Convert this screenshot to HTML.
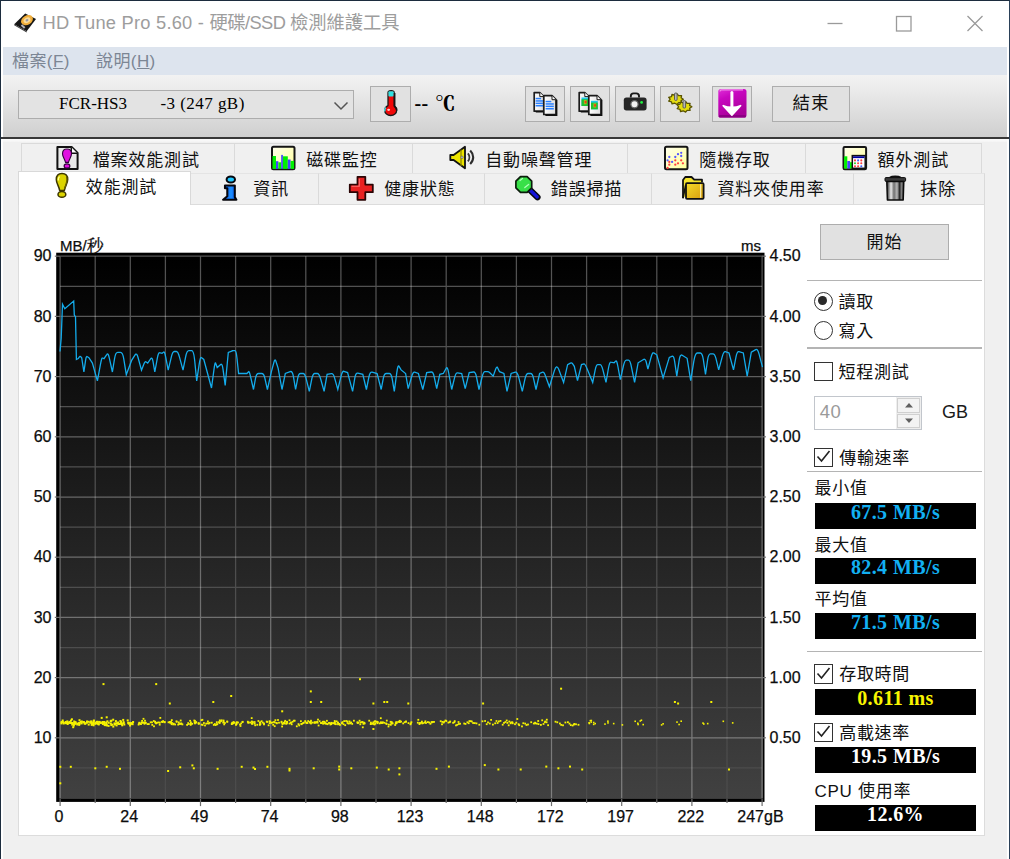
<!DOCTYPE html>
<html><head><meta charset="utf-8"><title>HD Tune Pro 5.60</title>
<style>
html,body{margin:0;padding:0}
body{width:1010px;height:859px;overflow:hidden;position:relative;background:#f0f0f0;font-family:"Liberation Sans","Noto Sans CJK TC",sans-serif;color:#111}
.abs,.tab,.ic,.tl,.btn,.blk,.sep,.lbl,.cb,.rd{position:absolute;box-sizing:border-box}
#frame{position:absolute;left:0;top:0;width:1010px;height:859px;box-sizing:border-box;border-top:1px solid #1c2c3e;border-left:1px solid #1c2c3e;border-right:1px solid #2a4058;pointer-events:none;z-index:50}
#inner{position:absolute;left:1px;top:1px;width:1008px;height:858px;box-sizing:border-box;border-left:2px solid #fff;border-right:2px solid #fff;pointer-events:none;z-index:49}
#title{position:absolute;left:1px;top:1px;width:1008px;height:46px;background:#fff}
#title .t{position:absolute;left:41.500px;top:7.400px;font-size:18.300px;color:#9d9d9d;white-space:nowrap;letter-spacing:0}
#menu{position:absolute;left:3px;top:47px;width:1004px;height:28px;background:#dde4ee}
#menu span{position:absolute;top:0.300px;font-size:17px;color:#7c8694;white-space:nowrap;letter-spacing:0.400px}
#tool{position:absolute;left:3px;top:75px;width:1004px;height:62px;background:linear-gradient(#f2f2f2 0,#ececec 20%,#dedede 60%,#cfcfcf 100%)}
#tline{position:absolute;left:1px;top:136.800px;width:1008px;height:1.800px;background:#383838;z-index:51}
#tline2{position:absolute;left:3px;top:138.600px;width:1004px;height:3px;background:linear-gradient(#fcfcfc,#f4f4f4)}
.btn{border:1px solid #adadad;background:#e1e1e1}
.btn svg{position:absolute}
#combo{position:absolute;left:18px;top:89.500px;width:336px;height:29.500px;box-sizing:border-box;border:1px solid #adadad;background:#e3e3e3}
#combo .v{position:absolute;left:40px;top:3px;font-family:"Liberation Serif","Noto Serif CJK SC",serif;font-size:17px;color:#000;white-space:pre}
.tab{border:1px solid #dadada;border-bottom:none;background:#f0f0f0;overflow:hidden}
.tab.bot{border-top-color:#e4e4e4}
.tab.sel{background:#fff;z-index:5;border-color:#d9d9d9}
.ic{display:block;line-height:0}
.tl{font-size:17px;white-space:nowrap;color:#111;letter-spacing:0.850px}
#panel{position:absolute;left:18px;top:204px;width:967px;height:632px;box-sizing:border-box;background:#fff;border:1px solid #dcdcdc}
.chart{position:absolute;left:0;top:0}
.sep{height:1.200px;background:#b4b4b4;left:806.500px;width:175.500px}
.lbl{font-size:17px;white-space:nowrap;color:#111;letter-spacing:0.700px}
.blk{background:#000;left:815px;width:161px;height:26px;text-align:center;font-family:"Liberation Serif","Noto Serif CJK SC",serif;font-weight:bold;font-size:20px;line-height:18.400px;letter-spacing:0.400px;white-space:nowrap;overflow:hidden}
.cb{width:19.200px;height:19.200px;border:1.500px solid #333;background:#fff;left:814px}
.cb svg{position:absolute;left:-1.500px;top:-1.500px}
.rd{width:19px;height:19px;border:1.500px solid #333;border-radius:50%;background:#fff;left:813.600px}
.rd i{position:absolute;left:3.600px;top:3.600px;width:8.800px;height:8.800px;border-radius:50%;background:#2a2a2a}
</style></head><body>
<div id="title">
<div class="t"><span style="letter-spacing:0.230px">HD Tune Pro 5.60 - </span><span style="letter-spacing:-0.550px">硬碟/SSD </span>檢測維護工具</div>
<svg class="abs" style="left:815px;top:6.800px" width="180" height="32" viewBox="0 0 180 32"><g stroke="#9a9a9a" stroke-width="1.300" fill="none"><path d="M11.500 15.500h15"/><rect x="80.500" y="8.500" width="14.500" height="14.500"/><path d="M151.500 8l15 15M166.500 8l-15 15"/></g></svg>
</div>
<div id="menu"><span style="left:9px">檔案(<u>F</u>)</span><span style="left:93px">說明(<u>H</u>)</span></div>
<div id="tool"></div><div id="tline"></div><div id="tline2"></div>
<div id="combo"><span class="v">FCR-HS3</span><span class="v" style="left:141.500px;letter-spacing:0.450px">-3 (247 gB)</span><svg class="abs" style="left:313px;top:9px" width="18" height="12" viewBox="0 0 18 12"><path d="M2.500 2.500l6.500 6.500 6.500-6.500" fill="none" stroke="#555" stroke-width="1.500"/></svg></div>
<div class="btn" style="left:370px;top:86px;width:40.500px;height:36px"></div>
<div class="abs" style="left:414.500px;top:91.500px;font-family:'Liberation Serif',serif;font-size:20px;font-weight:bold;white-space:pre;color:#000;letter-spacing:0.300px">--</div><div class="abs" style="left:435.300px;top:88px;font-family:'Noto Serif CJK SC','Noto Serif CJK JP',serif;font-size:20px;font-weight:900;color:#000">℃</div>
<div class="btn" style="left:525px;top:86px;width:40px;height:36px"></div>
<div class="btn" style="left:570px;top:86px;width:40px;height:36px"></div>
<div class="btn" style="left:615px;top:86px;width:40px;height:36px"></div>
<div class="btn" style="left:660px;top:86px;width:40px;height:36px"></div>
<div class="btn" style="left:712px;top:86px;width:40px;height:36px"></div>
<div class="btn" style="left:772px;top:86px;width:78px;height:36px;text-align:center;font-size:17.5px;line-height:32px;letter-spacing:1px">結束</div>

<div id="panel"></div>
<div class="tab" style="left:20.5px;top:143.300px;width:214.5px;height:31px"><span class="tl" style="left:71.2px;top:1.700px">檔案效能測試</span></div>
<div class="tab" style="left:234px;top:143.300px;width:179.0px;height:31px"><span class="tl" style="left:71.2px;top:1.700px">磁碟監控</span></div>
<div class="tab" style="left:412px;top:143.300px;width:215.5px;height:31px"><span class="tl" style="left:72.2px;top:1.700px">自動噪聲管理</span></div>
<div class="tab" style="left:626.5px;top:143.300px;width:179.5px;height:31px"><span class="tl" style="left:71.8px;top:1.700px">隨機存取</span></div>
<div class="tab" style="left:805px;top:143.300px;width:177.0px;height:31px"><span class="tl" style="left:71.6px;top:1.700px">額外測試</span></div>
<div class="tab sel" style="left:18px;top:170.600px;width:173.3px;height:34.400px"><span class="tl" style="left:66.8px;top:1px">效能測試</span></div>
<div class="tab bot" style="left:190.3px;top:173px;width:128.4px;height:31px"><span class="tl" style="left:62.0px;top:1px">資訊</span></div>
<div class="tab bot" style="left:317.7px;top:173px;width:167.6px;height:31px"><span class="tl" style="left:65.5px;top:1px">健康狀態</span></div>
<div class="tab bot" style="left:484.3px;top:173px;width:167.6px;height:31px"><span class="tl" style="left:65.5px;top:1px">錯誤掃描</span></div>
<div class="tab bot" style="left:650.9px;top:173px;width:203.1px;height:31px"><span class="tl" style="left:65.5px;top:1px">資料夾使用率</span></div>
<div class="tab bot" style="left:853px;top:173px;width:132.0px;height:31px"><span class="tl" style="left:66.3px;top:1px">抹除</span></div>
<svg class="chart" width="1010" height="859" viewBox="0 0 1010 859">
<defs><linearGradient id="cg" x1="0" y1="0" x2="0" y2="1"><stop offset="0" stop-color="#000"/><stop offset="1" stop-color="#414141"/></linearGradient><linearGradient id="mn" gradientUnits="userSpaceOnUse" x1="0" y1="256" x2="0" y2="800"><stop offset="0" stop-color="#525252"/><stop offset="1" stop-color="#4b4b4b"/></linearGradient></defs>
<rect x="56.200" y="252.700" width="708.300" height="549.200" fill="#000"/>
<rect x="59.300" y="255.500" width="703.500" height="543.400" fill="url(#cg)"/>
<path d="M95.20 256.20V798.00M165.40 256.20V798.00M235.60 256.20V798.00M305.80 256.20V798.00M376.00 256.20V798.00M446.20 256.20V798.00M516.40 256.20V798.00M586.60 256.20V798.00M656.80 256.20V798.00M727.00 256.20V798.00M60.10 286.30H762.10M60.10 346.50H762.10M60.10 406.70H762.10M60.10 466.90H762.10M60.10 527.10H762.10M60.10 587.30H762.10M60.10 647.50H762.10M60.10 707.70H762.10M60.10 767.90H762.10" fill="none" stroke="url(#mn)" stroke-width="1.250"/>
<path d="M60.10 256.20V798.00M130.30 256.20V798.00M200.50 256.20V798.00M270.70 256.20V798.00M340.90 256.20V798.00M411.10 256.20V798.00M481.30 256.20V798.00M551.50 256.20V798.00M621.70 256.20V798.00M691.90 256.20V798.00M762.10 256.20V798.00M60.10 256.20H762.10M60.10 316.40H762.10M60.10 376.60H762.10M60.10 436.80H762.10M60.10 497.00H762.10M60.10 557.20H762.10M60.10 617.40H762.10M60.10 677.60H762.10M60.10 737.80H762.10" fill="none" stroke="#fff" stroke-opacity="0.330" stroke-width="1.250"/>
<g fill="#f6f200">
<rect x="60.4" y="722.4" width="2.0" height="2.0"/>
<rect x="61.0" y="721.1" width="2.0" height="2.0"/>
<rect x="60.5" y="721.1" width="2.0" height="2.0"/>
<rect x="62.0" y="721.2" width="2.0" height="2.0"/>
<rect x="61.7" y="719.5" width="2.0" height="2.0"/>
<rect x="62.7" y="722.5" width="2.0" height="2.0"/>
<rect x="62.9" y="721.8" width="2.0" height="2.0"/>
<rect x="65.0" y="722.2" width="2.0" height="2.0"/>
<rect x="64.8" y="721.0" width="2.0" height="2.0"/>
<rect x="66.3" y="720.4" width="2.0" height="2.0"/>
<rect x="65.6" y="722.0" width="2.0" height="2.0"/>
<rect x="66.7" y="723.0" width="2.0" height="2.0"/>
<rect x="67.6" y="721.8" width="2.0" height="2.0"/>
<rect x="66.4" y="721.8" width="2.0" height="2.0"/>
<rect x="68.6" y="720.9" width="2.0" height="2.0"/>
<rect x="69.0" y="721.4" width="2.0" height="2.0"/>
<rect x="68.5" y="721.7" width="2.0" height="2.0"/>
<rect x="69.2" y="722.0" width="2.0" height="2.0"/>
<rect x="70.0" y="719.6" width="2.0" height="2.0"/>
<rect x="71.0" y="722.0" width="2.0" height="2.0"/>
<rect x="70.9" y="718.3" width="2.0" height="2.0"/>
<rect x="72.8" y="724.5" width="2.0" height="2.0"/>
<rect x="71.2" y="723.6" width="2.0" height="2.0"/>
<rect x="72.2" y="726.2" width="2.0" height="2.0"/>
<rect x="73.1" y="722.0" width="2.0" height="2.0"/>
<rect x="73.2" y="720.5" width="2.0" height="2.0"/>
<rect x="72.8" y="723.4" width="2.0" height="2.0"/>
<rect x="74.0" y="722.8" width="2.0" height="2.0"/>
<rect x="74.8" y="722.2" width="2.0" height="2.0"/>
<rect x="74.5" y="721.1" width="2.0" height="2.0"/>
<rect x="76.5" y="722.9" width="2.0" height="2.0"/>
<rect x="76.3" y="723.5" width="2.0" height="2.0"/>
<rect x="77.6" y="722.1" width="2.0" height="2.0"/>
<rect x="78.5" y="722.0" width="2.0" height="2.0"/>
<rect x="78.6" y="722.8" width="2.0" height="2.0"/>
<rect x="78.2" y="723.9" width="2.0" height="2.0"/>
<rect x="78.5" y="719.2" width="2.0" height="2.0"/>
<rect x="80.8" y="720.8" width="2.0" height="2.0"/>
<rect x="79.7" y="720.9" width="2.0" height="2.0"/>
<rect x="80.7" y="722.4" width="2.0" height="2.0"/>
<rect x="80.8" y="720.6" width="2.0" height="2.0"/>
<rect x="83.7" y="722.2" width="2.0" height="2.0"/>
<rect x="82.9" y="721.0" width="2.0" height="2.0"/>
<rect x="84.3" y="722.8" width="2.0" height="2.0"/>
<rect x="83.6" y="722.4" width="2.0" height="2.0"/>
<rect x="85.8" y="721.8" width="2.0" height="2.0"/>
<rect x="86.0" y="720.5" width="2.0" height="2.0"/>
<rect x="87.7" y="723.6" width="2.0" height="2.0"/>
<rect x="87.3" y="720.8" width="2.0" height="2.0"/>
<rect x="89.4" y="720.8" width="2.0" height="2.0"/>
<rect x="89.3" y="721.6" width="2.0" height="2.0"/>
<rect x="90.3" y="720.4" width="2.0" height="2.0"/>
<rect x="90.3" y="721.6" width="2.0" height="2.0"/>
<rect x="90.8" y="722.4" width="2.0" height="2.0"/>
<rect x="90.4" y="721.1" width="2.0" height="2.0"/>
<rect x="90.7" y="723.9" width="2.0" height="2.0"/>
<rect x="92.3" y="721.9" width="2.0" height="2.0"/>
<rect x="91.9" y="723.3" width="2.0" height="2.0"/>
<rect x="92.5" y="722.6" width="2.0" height="2.0"/>
<rect x="92.9" y="719.5" width="2.0" height="2.0"/>
<rect x="92.8" y="720.0" width="2.0" height="2.0"/>
<rect x="92.6" y="724.3" width="2.0" height="2.0"/>
<rect x="94.3" y="721.6" width="2.0" height="2.0"/>
<rect x="94.2" y="722.8" width="2.0" height="2.0"/>
<rect x="95.6" y="722.4" width="2.0" height="2.0"/>
<rect x="96.0" y="720.8" width="2.0" height="2.0"/>
<rect x="96.2" y="721.5" width="2.0" height="2.0"/>
<rect x="97.3" y="723.1" width="2.0" height="2.0"/>
<rect x="96.7" y="722.3" width="2.0" height="2.0"/>
<rect x="96.8" y="720.9" width="2.0" height="2.0"/>
<rect x="99.1" y="721.4" width="2.0" height="2.0"/>
<rect x="98.3" y="720.9" width="2.0" height="2.0"/>
<rect x="97.8" y="723.4" width="2.0" height="2.0"/>
<rect x="100.0" y="721.9" width="2.0" height="2.0"/>
<rect x="100.7" y="716.9" width="2.0" height="2.0"/>
<rect x="99.4" y="721.8" width="2.0" height="2.0"/>
<rect x="102.4" y="721.7" width="2.0" height="2.0"/>
<rect x="101.6" y="721.0" width="2.0" height="2.0"/>
<rect x="101.9" y="723.0" width="2.0" height="2.0"/>
<rect x="103.1" y="721.0" width="2.0" height="2.0"/>
<rect x="103.4" y="722.4" width="2.0" height="2.0"/>
<rect x="103.7" y="724.0" width="2.0" height="2.0"/>
<rect x="105.5" y="723.6" width="2.0" height="2.0"/>
<rect x="105.2" y="721.5" width="2.0" height="2.0"/>
<rect x="104.4" y="724.2" width="2.0" height="2.0"/>
<rect x="106.4" y="720.3" width="2.0" height="2.0"/>
<rect x="106.0" y="724.4" width="2.0" height="2.0"/>
<rect x="105.3" y="722.3" width="2.0" height="2.0"/>
<rect x="107.6" y="724.9" width="2.0" height="2.0"/>
<rect x="107.7" y="721.8" width="2.0" height="2.0"/>
<rect x="109.7" y="720.1" width="2.0" height="2.0"/>
<rect x="109.8" y="722.5" width="2.0" height="2.0"/>
<rect x="110.4" y="719.7" width="2.0" height="2.0"/>
<rect x="111.4" y="723.7" width="2.0" height="2.0"/>
<rect x="110.3" y="724.1" width="2.0" height="2.0"/>
<rect x="112.2" y="718.7" width="2.0" height="2.0"/>
<rect x="112.3" y="725.6" width="2.0" height="2.0"/>
<rect x="113.5" y="722.5" width="2.0" height="2.0"/>
<rect x="113.9" y="723.5" width="2.0" height="2.0"/>
<rect x="114.5" y="722.5" width="2.0" height="2.0"/>
<rect x="114.9" y="720.1" width="2.0" height="2.0"/>
<rect x="115.6" y="724.4" width="2.0" height="2.0"/>
<rect x="116.9" y="722.5" width="2.0" height="2.0"/>
<rect x="117.1" y="721.5" width="2.0" height="2.0"/>
<rect x="115.9" y="722.2" width="2.0" height="2.0"/>
<rect x="117.7" y="722.8" width="2.0" height="2.0"/>
<rect x="118.7" y="723.0" width="2.0" height="2.0"/>
<rect x="117.9" y="723.0" width="2.0" height="2.0"/>
<rect x="119.6" y="722.7" width="2.0" height="2.0"/>
<rect x="119.4" y="720.0" width="2.0" height="2.0"/>
<rect x="120.0" y="720.8" width="2.0" height="2.0"/>
<rect x="120.1" y="721.6" width="2.0" height="2.0"/>
<rect x="120.9" y="723.0" width="2.0" height="2.0"/>
<rect x="122.2" y="718.9" width="2.0" height="2.0"/>
<rect x="121.2" y="724.3" width="2.0" height="2.0"/>
<rect x="123.3" y="723.5" width="2.0" height="2.0"/>
<rect x="122.6" y="722.0" width="2.0" height="2.0"/>
<rect x="122.6" y="721.1" width="2.0" height="2.0"/>
<rect x="126.7" y="719.4" width="2.0" height="2.0"/>
<rect x="127.3" y="721.7" width="2.0" height="2.0"/>
<rect x="127.6" y="722.0" width="2.0" height="2.0"/>
<rect x="127.8" y="722.3" width="2.0" height="2.0"/>
<rect x="127.8" y="722.6" width="2.0" height="2.0"/>
<rect x="129.1" y="724.5" width="2.0" height="2.0"/>
<rect x="129.5" y="723.0" width="2.0" height="2.0"/>
<rect x="130.0" y="722.6" width="2.0" height="2.0"/>
<rect x="129.9" y="722.1" width="2.0" height="2.0"/>
<rect x="131.6" y="723.2" width="2.0" height="2.0"/>
<rect x="132.1" y="721.0" width="2.0" height="2.0"/>
<rect x="131.2" y="722.3" width="2.0" height="2.0"/>
<rect x="138.1" y="722.6" width="1.8" height="1.8"/>
<rect x="137.7" y="723.7" width="1.8" height="1.8"/>
<rect x="138.4" y="721.8" width="1.8" height="1.8"/>
<rect x="139.0" y="722.6" width="1.8" height="1.8"/>
<rect x="141.2" y="720.0" width="1.8" height="1.8"/>
<rect x="140.1" y="723.2" width="1.8" height="1.8"/>
<rect x="140.6" y="721.7" width="1.8" height="1.8"/>
<rect x="141.7" y="721.9" width="1.8" height="1.8"/>
<rect x="142.8" y="721.6" width="1.8" height="1.8"/>
<rect x="143.6" y="722.9" width="1.8" height="1.8"/>
<rect x="143.7" y="722.2" width="1.8" height="1.8"/>
<rect x="142.6" y="717.9" width="1.8" height="1.8"/>
<rect x="144.9" y="722.0" width="1.8" height="1.8"/>
<rect x="144.1" y="719.8" width="1.8" height="1.8"/>
<rect x="144.5" y="721.7" width="1.8" height="1.8"/>
<rect x="146.6" y="723.2" width="1.8" height="1.8"/>
<rect x="147.9" y="723.2" width="1.8" height="1.8"/>
<rect x="149.8" y="721.4" width="1.8" height="1.8"/>
<rect x="151.1" y="721.4" width="1.8" height="1.8"/>
<rect x="151.4" y="724.0" width="1.8" height="1.8"/>
<rect x="152.9" y="720.1" width="1.8" height="1.8"/>
<rect x="154.2" y="720.8" width="1.8" height="1.8"/>
<rect x="153.1" y="725.4" width="1.8" height="1.8"/>
<rect x="154.4" y="721.7" width="1.8" height="1.8"/>
<rect x="155.2" y="722.5" width="1.8" height="1.8"/>
<rect x="155.3" y="722.1" width="1.8" height="1.8"/>
<rect x="156.2" y="721.8" width="1.8" height="1.8"/>
<rect x="157.7" y="721.5" width="1.8" height="1.8"/>
<rect x="158.9" y="721.8" width="1.8" height="1.8"/>
<rect x="158.8" y="723.8" width="1.8" height="1.8"/>
<rect x="159.4" y="717.0" width="1.8" height="1.8"/>
<rect x="160.8" y="720.9" width="1.8" height="1.8"/>
<rect x="161.7" y="721.2" width="1.8" height="1.8"/>
<rect x="162.2" y="720.2" width="1.8" height="1.8"/>
<rect x="163.6" y="721.4" width="1.8" height="1.8"/>
<rect x="163.8" y="721.1" width="1.8" height="1.8"/>
<rect x="167.6" y="721.4" width="1.8" height="1.8"/>
<rect x="169.2" y="721.8" width="1.8" height="1.8"/>
<rect x="169.0" y="721.0" width="1.8" height="1.8"/>
<rect x="170.7" y="723.3" width="1.8" height="1.8"/>
<rect x="170.4" y="722.0" width="1.8" height="1.8"/>
<rect x="170.1" y="720.9" width="1.8" height="1.8"/>
<rect x="171.1" y="722.1" width="1.8" height="1.8"/>
<rect x="170.9" y="719.2" width="1.8" height="1.8"/>
<rect x="172.3" y="723.5" width="1.8" height="1.8"/>
<rect x="172.9" y="722.8" width="1.8" height="1.8"/>
<rect x="174.2" y="723.6" width="1.8" height="1.8"/>
<rect x="175.8" y="720.9" width="1.8" height="1.8"/>
<rect x="175.6" y="720.4" width="1.8" height="1.8"/>
<rect x="177.3" y="723.7" width="1.8" height="1.8"/>
<rect x="177.9" y="721.5" width="1.8" height="1.8"/>
<rect x="178.3" y="723.1" width="1.8" height="1.8"/>
<rect x="180.1" y="722.6" width="1.8" height="1.8"/>
<rect x="179.8" y="719.6" width="1.8" height="1.8"/>
<rect x="179.8" y="723.0" width="1.8" height="1.8"/>
<rect x="181.5" y="723.5" width="1.8" height="1.8"/>
<rect x="180.6" y="722.7" width="1.8" height="1.8"/>
<rect x="187.3" y="722.2" width="1.8" height="1.8"/>
<rect x="186.2" y="724.0" width="1.8" height="1.8"/>
<rect x="188.0" y="723.1" width="1.8" height="1.8"/>
<rect x="189.2" y="719.9" width="1.8" height="1.8"/>
<rect x="189.9" y="723.0" width="1.8" height="1.8"/>
<rect x="189.8" y="724.0" width="1.8" height="1.8"/>
<rect x="190.0" y="721.5" width="1.8" height="1.8"/>
<rect x="191.3" y="722.9" width="1.8" height="1.8"/>
<rect x="194.0" y="720.0" width="1.8" height="1.8"/>
<rect x="193.4" y="719.6" width="1.8" height="1.8"/>
<rect x="193.7" y="721.6" width="1.8" height="1.8"/>
<rect x="195.3" y="721.3" width="1.8" height="1.8"/>
<rect x="194.1" y="722.5" width="1.8" height="1.8"/>
<rect x="195.2" y="721.6" width="1.8" height="1.8"/>
<rect x="197.8" y="722.6" width="1.8" height="1.8"/>
<rect x="197.7" y="722.3" width="1.8" height="1.8"/>
<rect x="197.9" y="722.8" width="1.8" height="1.8"/>
<rect x="200.6" y="719.3" width="1.8" height="1.8"/>
<rect x="200.7" y="723.7" width="1.8" height="1.8"/>
<rect x="201.5" y="718.9" width="1.8" height="1.8"/>
<rect x="201.7" y="724.0" width="1.8" height="1.8"/>
<rect x="203.0" y="722.1" width="1.8" height="1.8"/>
<rect x="205.3" y="722.7" width="1.8" height="1.8"/>
<rect x="204.1" y="724.6" width="1.8" height="1.8"/>
<rect x="207.0" y="720.5" width="1.8" height="1.8"/>
<rect x="206.8" y="722.4" width="1.8" height="1.8"/>
<rect x="207.9" y="722.6" width="1.8" height="1.8"/>
<rect x="208.8" y="721.9" width="1.8" height="1.8"/>
<rect x="210.9" y="721.8" width="1.8" height="1.8"/>
<rect x="212.9" y="724.0" width="1.8" height="1.8"/>
<rect x="213.9" y="723.1" width="1.8" height="1.8"/>
<rect x="214.7" y="724.2" width="1.8" height="1.8"/>
<rect x="215.9" y="723.4" width="1.8" height="1.8"/>
<rect x="215.9" y="721.3" width="1.8" height="1.8"/>
<rect x="216.4" y="723.3" width="1.8" height="1.8"/>
<rect x="218.6" y="722.1" width="1.8" height="1.8"/>
<rect x="218.1" y="721.2" width="1.8" height="1.8"/>
<rect x="218.8" y="721.5" width="1.8" height="1.8"/>
<rect x="220.1" y="720.3" width="1.8" height="1.8"/>
<rect x="218.9" y="719.5" width="1.8" height="1.8"/>
<rect x="220.7" y="719.4" width="1.8" height="1.8"/>
<rect x="222.3" y="721.7" width="1.8" height="1.8"/>
<rect x="222.7" y="720.6" width="1.8" height="1.8"/>
<rect x="222.6" y="719.6" width="1.8" height="1.8"/>
<rect x="223.3" y="723.5" width="1.8" height="1.8"/>
<rect x="224.0" y="722.1" width="1.8" height="1.8"/>
<rect x="226.3" y="720.6" width="1.8" height="1.8"/>
<rect x="226.4" y="720.9" width="1.8" height="1.8"/>
<rect x="230.9" y="722.8" width="1.8" height="1.8"/>
<rect x="230.9" y="723.2" width="1.8" height="1.8"/>
<rect x="231.4" y="722.1" width="1.8" height="1.8"/>
<rect x="231.7" y="721.7" width="1.8" height="1.8"/>
<rect x="232.3" y="722.5" width="1.8" height="1.8"/>
<rect x="232.8" y="721.1" width="1.8" height="1.8"/>
<rect x="233.4" y="721.9" width="1.8" height="1.8"/>
<rect x="235.1" y="724.0" width="1.8" height="1.8"/>
<rect x="235.4" y="722.3" width="1.8" height="1.8"/>
<rect x="235.7" y="723.1" width="1.8" height="1.8"/>
<rect x="235.9" y="721.3" width="1.8" height="1.8"/>
<rect x="237.1" y="721.6" width="1.8" height="1.8"/>
<rect x="239.6" y="725.1" width="1.8" height="1.8"/>
<rect x="240.3" y="722.6" width="1.8" height="1.8"/>
<rect x="239.1" y="723.6" width="1.8" height="1.8"/>
<rect x="241.5" y="721.2" width="1.8" height="1.8"/>
<rect x="241.8" y="720.9" width="1.8" height="1.8"/>
<rect x="246.9" y="720.8" width="1.8" height="1.8"/>
<rect x="247.6" y="721.8" width="1.8" height="1.8"/>
<rect x="247.2" y="721.6" width="1.8" height="1.8"/>
<rect x="249.2" y="721.6" width="1.8" height="1.8"/>
<rect x="250.8" y="717.2" width="1.8" height="1.8"/>
<rect x="250.9" y="722.3" width="1.8" height="1.8"/>
<rect x="251.0" y="720.6" width="1.8" height="1.8"/>
<rect x="251.7" y="722.7" width="1.8" height="1.8"/>
<rect x="251.1" y="722.9" width="1.8" height="1.8"/>
<rect x="252.0" y="721.2" width="1.8" height="1.8"/>
<rect x="253.8" y="722.7" width="1.8" height="1.8"/>
<rect x="253.7" y="721.1" width="1.8" height="1.8"/>
<rect x="254.3" y="724.4" width="1.8" height="1.8"/>
<rect x="256.4" y="723.9" width="1.8" height="1.8"/>
<rect x="257.5" y="720.1" width="1.8" height="1.8"/>
<rect x="259.4" y="721.4" width="1.8" height="1.8"/>
<rect x="258.9" y="721.9" width="1.8" height="1.8"/>
<rect x="259.5" y="723.1" width="1.8" height="1.8"/>
<rect x="259.0" y="724.0" width="1.8" height="1.8"/>
<rect x="260.7" y="720.3" width="1.8" height="1.8"/>
<rect x="263.1" y="723.5" width="1.8" height="1.8"/>
<rect x="261.9" y="721.7" width="1.8" height="1.8"/>
<rect x="263.1" y="722.6" width="1.8" height="1.8"/>
<rect x="265.8" y="720.7" width="1.8" height="1.8"/>
<rect x="266.3" y="721.0" width="1.8" height="1.8"/>
<rect x="267.7" y="724.4" width="1.8" height="1.8"/>
<rect x="268.7" y="722.2" width="1.8" height="1.8"/>
<rect x="268.6" y="720.4" width="1.8" height="1.8"/>
<rect x="269.3" y="720.7" width="1.8" height="1.8"/>
<rect x="270.3" y="721.9" width="1.8" height="1.8"/>
<rect x="271.6" y="721.6" width="1.8" height="1.8"/>
<rect x="272.3" y="723.9" width="1.8" height="1.8"/>
<rect x="273.1" y="721.1" width="1.8" height="1.8"/>
<rect x="274.0" y="721.5" width="1.8" height="1.8"/>
<rect x="273.8" y="725.3" width="1.8" height="1.8"/>
<rect x="274.5" y="719.3" width="1.8" height="1.8"/>
<rect x="275.9" y="722.4" width="1.8" height="1.8"/>
<rect x="275.7" y="722.1" width="1.8" height="1.8"/>
<rect x="277.1" y="719.1" width="1.8" height="1.8"/>
<rect x="278.1" y="721.8" width="1.8" height="1.8"/>
<rect x="280.6" y="720.8" width="1.8" height="1.8"/>
<rect x="280.7" y="721.6" width="1.8" height="1.8"/>
<rect x="281.6" y="723.0" width="1.8" height="1.8"/>
<rect x="281.2" y="725.6" width="1.8" height="1.8"/>
<rect x="281.9" y="722.8" width="1.8" height="1.8"/>
<rect x="283.8" y="721.0" width="1.8" height="1.8"/>
<rect x="284.0" y="722.6" width="1.8" height="1.8"/>
<rect x="282.9" y="722.0" width="1.8" height="1.8"/>
<rect x="284.3" y="719.9" width="1.8" height="1.8"/>
<rect x="285.5" y="722.9" width="1.8" height="1.8"/>
<rect x="286.0" y="722.3" width="1.8" height="1.8"/>
<rect x="286.2" y="721.1" width="1.8" height="1.8"/>
<rect x="286.1" y="720.9" width="1.8" height="1.8"/>
<rect x="288.6" y="719.4" width="1.8" height="1.8"/>
<rect x="288.6" y="722.6" width="1.8" height="1.8"/>
<rect x="290.0" y="721.7" width="1.8" height="1.8"/>
<rect x="290.8" y="723.4" width="1.8" height="1.8"/>
<rect x="290.0" y="721.9" width="1.8" height="1.8"/>
<rect x="291.7" y="720.9" width="1.8" height="1.8"/>
<rect x="292.9" y="719.8" width="1.8" height="1.8"/>
<rect x="293.8" y="719.8" width="1.8" height="1.8"/>
<rect x="295.9" y="725.4" width="1.8" height="1.8"/>
<rect x="297.6" y="723.2" width="1.8" height="1.8"/>
<rect x="298.3" y="724.5" width="1.8" height="1.8"/>
<rect x="300.0" y="720.3" width="1.8" height="1.8"/>
<rect x="300.5" y="723.0" width="1.8" height="1.8"/>
<rect x="302.0" y="722.3" width="1.8" height="1.8"/>
<rect x="300.7" y="723.3" width="1.8" height="1.8"/>
<rect x="303.0" y="721.8" width="1.8" height="1.8"/>
<rect x="304.3" y="720.2" width="1.8" height="1.8"/>
<rect x="305.9" y="722.1" width="1.8" height="1.8"/>
<rect x="305.2" y="721.7" width="1.8" height="1.8"/>
<rect x="306.5" y="722.1" width="1.8" height="1.8"/>
<rect x="307.3" y="720.2" width="1.8" height="1.8"/>
<rect x="309.1" y="721.1" width="1.8" height="1.8"/>
<rect x="309.5" y="721.7" width="1.8" height="1.8"/>
<rect x="308.8" y="721.6" width="1.8" height="1.8"/>
<rect x="310.1" y="719.8" width="1.8" height="1.8"/>
<rect x="310.1" y="722.6" width="1.8" height="1.8"/>
<rect x="309.9" y="721.1" width="1.8" height="1.8"/>
<rect x="311.9" y="721.7" width="1.8" height="1.8"/>
<rect x="313.8" y="721.9" width="1.8" height="1.8"/>
<rect x="313.8" y="721.5" width="1.8" height="1.8"/>
<rect x="314.1" y="721.4" width="1.8" height="1.8"/>
<rect x="315.2" y="721.6" width="1.8" height="1.8"/>
<rect x="316.2" y="720.9" width="1.8" height="1.8"/>
<rect x="316.7" y="721.8" width="1.8" height="1.8"/>
<rect x="317.1" y="718.7" width="1.8" height="1.8"/>
<rect x="317.7" y="724.6" width="1.8" height="1.8"/>
<rect x="318.7" y="720.3" width="1.8" height="1.8"/>
<rect x="320.9" y="722.2" width="1.8" height="1.8"/>
<rect x="320.0" y="722.1" width="1.8" height="1.8"/>
<rect x="321.8" y="720.9" width="1.8" height="1.8"/>
<rect x="322.2" y="722.8" width="1.8" height="1.8"/>
<rect x="322.7" y="720.8" width="1.8" height="1.8"/>
<rect x="323.7" y="720.9" width="1.8" height="1.8"/>
<rect x="324.5" y="722.7" width="1.8" height="1.8"/>
<rect x="323.9" y="722.1" width="1.8" height="1.8"/>
<rect x="324.5" y="722.3" width="1.8" height="1.8"/>
<rect x="325.8" y="722.9" width="1.8" height="1.8"/>
<rect x="326.7" y="723.3" width="1.8" height="1.8"/>
<rect x="326.0" y="719.9" width="1.8" height="1.8"/>
<rect x="328.0" y="722.1" width="1.8" height="1.8"/>
<rect x="328.8" y="722.1" width="1.8" height="1.8"/>
<rect x="330.0" y="723.0" width="1.8" height="1.8"/>
<rect x="329.5" y="723.6" width="1.8" height="1.8"/>
<rect x="330.5" y="721.9" width="1.8" height="1.8"/>
<rect x="330.4" y="723.2" width="1.8" height="1.8"/>
<rect x="331.0" y="722.3" width="1.8" height="1.8"/>
<rect x="332.5" y="722.3" width="1.8" height="1.8"/>
<rect x="333.9" y="722.9" width="1.8" height="1.8"/>
<rect x="333.3" y="722.3" width="1.8" height="1.8"/>
<rect x="333.8" y="720.1" width="1.8" height="1.8"/>
<rect x="335.0" y="723.3" width="1.8" height="1.8"/>
<rect x="334.0" y="721.2" width="1.8" height="1.8"/>
<rect x="336.8" y="721.6" width="1.8" height="1.8"/>
<rect x="335.7" y="720.4" width="1.8" height="1.8"/>
<rect x="337.1" y="723.4" width="1.8" height="1.8"/>
<rect x="337.1" y="721.9" width="1.8" height="1.8"/>
<rect x="339.1" y="724.0" width="1.8" height="1.8"/>
<rect x="338.2" y="723.0" width="1.8" height="1.8"/>
<rect x="341.0" y="722.2" width="1.8" height="1.8"/>
<rect x="340.9" y="722.4" width="1.8" height="1.8"/>
<rect x="341.6" y="721.2" width="1.8" height="1.8"/>
<rect x="343.3" y="720.2" width="1.8" height="1.8"/>
<rect x="342.6" y="723.3" width="1.8" height="1.8"/>
<rect x="344.3" y="724.3" width="1.8" height="1.8"/>
<rect x="345.2" y="720.1" width="1.8" height="1.8"/>
<rect x="346.6" y="720.5" width="1.8" height="1.8"/>
<rect x="346.6" y="722.1" width="1.8" height="1.8"/>
<rect x="347.6" y="722.7" width="1.8" height="1.8"/>
<rect x="349.3" y="722.3" width="1.8" height="1.8"/>
<rect x="349.2" y="722.4" width="1.8" height="1.8"/>
<rect x="348.6" y="720.5" width="1.8" height="1.8"/>
<rect x="350.3" y="721.6" width="1.8" height="1.8"/>
<rect x="351.3" y="723.0" width="1.8" height="1.8"/>
<rect x="353.0" y="719.8" width="1.8" height="1.8"/>
<rect x="356.5" y="721.4" width="1.8" height="1.8"/>
<rect x="356.8" y="722.1" width="1.8" height="1.8"/>
<rect x="357.3" y="721.8" width="1.8" height="1.8"/>
<rect x="358.7" y="719.8" width="1.8" height="1.8"/>
<rect x="359.5" y="721.5" width="1.8" height="1.8"/>
<rect x="359.4" y="723.4" width="1.8" height="1.8"/>
<rect x="361.0" y="721.3" width="1.8" height="1.8"/>
<rect x="361.7" y="721.1" width="1.8" height="1.8"/>
<rect x="361.9" y="726.4" width="1.8" height="1.8"/>
<rect x="363.2" y="721.8" width="1.8" height="1.8"/>
<rect x="362.5" y="722.9" width="1.8" height="1.8"/>
<rect x="363.4" y="722.5" width="1.8" height="1.8"/>
<rect x="363.7" y="722.4" width="1.8" height="1.8"/>
<rect x="369.8" y="723.2" width="1.8" height="1.8"/>
<rect x="368.3" y="719.8" width="1.8" height="1.8"/>
<rect x="370.0" y="722.9" width="1.8" height="1.8"/>
<rect x="370.0" y="721.7" width="1.8" height="1.8"/>
<rect x="372.4" y="721.5" width="1.8" height="1.8"/>
<rect x="371.5" y="722.7" width="1.8" height="1.8"/>
<rect x="372.5" y="723.1" width="1.8" height="1.8"/>
<rect x="373.6" y="723.6" width="1.8" height="1.8"/>
<rect x="373.6" y="720.7" width="1.8" height="1.8"/>
<rect x="374.4" y="720.7" width="1.8" height="1.8"/>
<rect x="374.4" y="722.8" width="1.8" height="1.8"/>
<rect x="374.3" y="720.4" width="1.8" height="1.8"/>
<rect x="376.0" y="720.8" width="1.8" height="1.8"/>
<rect x="376.6" y="722.3" width="1.8" height="1.8"/>
<rect x="376.5" y="721.2" width="1.8" height="1.8"/>
<rect x="376.8" y="721.2" width="1.8" height="1.8"/>
<rect x="378.7" y="722.5" width="1.8" height="1.8"/>
<rect x="379.9" y="721.5" width="1.8" height="1.8"/>
<rect x="379.9" y="717.3" width="1.8" height="1.8"/>
<rect x="380.4" y="721.6" width="1.8" height="1.8"/>
<rect x="380.1" y="722.0" width="1.8" height="1.8"/>
<rect x="381.3" y="722.1" width="1.8" height="1.8"/>
<rect x="382.0" y="721.4" width="1.8" height="1.8"/>
<rect x="383.3" y="721.9" width="1.8" height="1.8"/>
<rect x="385.1" y="722.5" width="1.8" height="1.8"/>
<rect x="385.8" y="723.1" width="1.8" height="1.8"/>
<rect x="385.9" y="719.7" width="1.8" height="1.8"/>
<rect x="388.0" y="723.7" width="1.8" height="1.8"/>
<rect x="387.6" y="725.6" width="1.8" height="1.8"/>
<rect x="389.7" y="720.9" width="1.8" height="1.8"/>
<rect x="389.9" y="723.9" width="1.8" height="1.8"/>
<rect x="390.8" y="721.2" width="1.8" height="1.8"/>
<rect x="390.4" y="722.4" width="1.8" height="1.8"/>
<rect x="391.5" y="722.4" width="1.8" height="1.8"/>
<rect x="391.6" y="722.5" width="1.8" height="1.8"/>
<rect x="394.3" y="724.1" width="1.8" height="1.8"/>
<rect x="394.8" y="722.4" width="1.8" height="1.8"/>
<rect x="395.4" y="722.4" width="1.8" height="1.8"/>
<rect x="395.3" y="721.2" width="1.8" height="1.8"/>
<rect x="395.8" y="721.9" width="1.8" height="1.8"/>
<rect x="398.4" y="720.6" width="1.8" height="1.8"/>
<rect x="397.3" y="721.0" width="1.8" height="1.8"/>
<rect x="399.0" y="721.2" width="1.8" height="1.8"/>
<rect x="398.9" y="719.9" width="1.8" height="1.8"/>
<rect x="400.2" y="720.7" width="1.8" height="1.8"/>
<rect x="402.3" y="722.5" width="1.8" height="1.8"/>
<rect x="403.8" y="721.3" width="1.8" height="1.8"/>
<rect x="405.2" y="720.7" width="1.8" height="1.8"/>
<rect x="405.0" y="720.7" width="1.8" height="1.8"/>
<rect x="407.6" y="722.2" width="1.8" height="1.8"/>
<rect x="409.5" y="723.4" width="1.8" height="1.8"/>
<rect x="410.0" y="722.6" width="1.8" height="1.8"/>
<rect x="410.5" y="721.3" width="1.8" height="1.8"/>
<rect x="416.9" y="721.8" width="1.8" height="1.8"/>
<rect x="417.4" y="718.9" width="1.8" height="1.8"/>
<rect x="418.7" y="722.4" width="1.8" height="1.8"/>
<rect x="418.6" y="723.2" width="1.8" height="1.8"/>
<rect x="419.1" y="722.1" width="1.8" height="1.8"/>
<rect x="421.0" y="720.7" width="1.8" height="1.8"/>
<rect x="420.5" y="721.8" width="1.8" height="1.8"/>
<rect x="422.1" y="722.2" width="1.8" height="1.8"/>
<rect x="421.4" y="722.5" width="1.8" height="1.8"/>
<rect x="424.5" y="720.4" width="1.8" height="1.8"/>
<rect x="423.9" y="721.7" width="1.8" height="1.8"/>
<rect x="425.1" y="722.1" width="1.8" height="1.8"/>
<rect x="427.0" y="721.2" width="1.8" height="1.8"/>
<rect x="428.3" y="721.6" width="1.8" height="1.8"/>
<rect x="429.5" y="722.9" width="1.8" height="1.8"/>
<rect x="430.8" y="721.2" width="1.8" height="1.8"/>
<rect x="430.7" y="721.6" width="1.8" height="1.8"/>
<rect x="431.8" y="721.1" width="1.8" height="1.8"/>
<rect x="433.1" y="721.0" width="1.8" height="1.8"/>
<rect x="439.8" y="720.3" width="1.8" height="1.8"/>
<rect x="441.1" y="723.4" width="1.8" height="1.8"/>
<rect x="441.4" y="721.0" width="1.8" height="1.8"/>
<rect x="442.7" y="721.7" width="1.8" height="1.8"/>
<rect x="443.3" y="720.8" width="1.8" height="1.8"/>
<rect x="444.6" y="719.6" width="1.8" height="1.8"/>
<rect x="445.4" y="720.1" width="1.8" height="1.8"/>
<rect x="447.5" y="721.7" width="1.8" height="1.8"/>
<rect x="448.8" y="721.3" width="1.8" height="1.8"/>
<rect x="449.3" y="720.6" width="1.8" height="1.8"/>
<rect x="452.2" y="721.9" width="1.8" height="1.8"/>
<rect x="453.5" y="721.4" width="1.8" height="1.8"/>
<rect x="453.8" y="720.2" width="1.8" height="1.8"/>
<rect x="455.1" y="724.5" width="1.8" height="1.8"/>
<rect x="456.3" y="723.9" width="1.8" height="1.8"/>
<rect x="457.6" y="721.1" width="1.8" height="1.8"/>
<rect x="457.9" y="723.1" width="1.8" height="1.8"/>
<rect x="459.2" y="722.8" width="1.8" height="1.8"/>
<rect x="463.3" y="722.6" width="1.8" height="1.8"/>
<rect x="464.6" y="723.0" width="1.8" height="1.8"/>
<rect x="466.5" y="721.4" width="1.8" height="1.8"/>
<rect x="467.8" y="722.3" width="1.8" height="1.8"/>
<rect x="468.5" y="720.2" width="1.8" height="1.8"/>
<rect x="469.8" y="720.3" width="1.8" height="1.8"/>
<rect x="470.9" y="720.6" width="1.8" height="1.8"/>
<rect x="472.2" y="722.1" width="1.8" height="1.8"/>
<rect x="473.9" y="722.2" width="1.8" height="1.8"/>
<rect x="475.6" y="722.5" width="1.8" height="1.8"/>
<rect x="478.4" y="723.8" width="1.8" height="1.8"/>
<rect x="481.6" y="720.4" width="1.8" height="1.8"/>
<rect x="484.2" y="720.1" width="1.8" height="1.8"/>
<rect x="485.8" y="723.3" width="1.8" height="1.8"/>
<rect x="487.1" y="721.5" width="1.8" height="1.8"/>
<rect x="488.9" y="722.6" width="1.8" height="1.8"/>
<rect x="490.2" y="719.0" width="1.8" height="1.8"/>
<rect x="492.0" y="723.7" width="1.8" height="1.8"/>
<rect x="494.3" y="722.4" width="1.8" height="1.8"/>
<rect x="495.6" y="720.1" width="1.8" height="1.8"/>
<rect x="496.7" y="722.1" width="1.8" height="1.8"/>
<rect x="498.0" y="720.5" width="1.8" height="1.8"/>
<rect x="499.6" y="720.0" width="1.8" height="1.8"/>
<rect x="501.8" y="723.8" width="1.8" height="1.8"/>
<rect x="503.1" y="722.0" width="1.8" height="1.8"/>
<rect x="504.5" y="721.1" width="1.8" height="1.8"/>
<rect x="505.8" y="719.6" width="1.8" height="1.8"/>
<rect x="506.5" y="722.0" width="1.8" height="1.8"/>
<rect x="507.8" y="724.4" width="1.8" height="1.8"/>
<rect x="508.4" y="720.6" width="1.8" height="1.8"/>
<rect x="509.7" y="722.4" width="1.8" height="1.8"/>
<rect x="510.1" y="721.6" width="1.8" height="1.8"/>
<rect x="511.4" y="721.3" width="1.8" height="1.8"/>
<rect x="511.8" y="722.4" width="1.8" height="1.8"/>
<rect x="514.1" y="723.3" width="1.8" height="1.8"/>
<rect x="515.4" y="721.8" width="1.8" height="1.8"/>
<rect x="516.4" y="718.1" width="1.8" height="1.8"/>
<rect x="517.7" y="723.3" width="1.8" height="1.8"/>
<rect x="518.3" y="724.3" width="1.8" height="1.8"/>
<rect x="521.1" y="725.5" width="1.8" height="1.8"/>
<rect x="522.4" y="722.3" width="1.8" height="1.8"/>
<rect x="524.3" y="722.7" width="1.8" height="1.8"/>
<rect x="525.6" y="724.1" width="1.8" height="1.8"/>
<rect x="527.1" y="723.6" width="1.8" height="1.8"/>
<rect x="530.3" y="721.3" width="1.8" height="1.8"/>
<rect x="532.9" y="722.6" width="1.8" height="1.8"/>
<rect x="534.2" y="721.8" width="1.8" height="1.8"/>
<rect x="534.3" y="722.5" width="1.8" height="1.8"/>
<rect x="536.0" y="722.7" width="1.8" height="1.8"/>
<rect x="537.3" y="720.1" width="1.8" height="1.8"/>
<rect x="537.6" y="723.2" width="1.8" height="1.8"/>
<rect x="540.0" y="724.0" width="1.8" height="1.8"/>
<rect x="541.3" y="719.4" width="1.8" height="1.8"/>
<rect x="542.6" y="723.1" width="1.8" height="1.8"/>
<rect x="543.9" y="721.3" width="1.8" height="1.8"/>
<rect x="544.4" y="720.6" width="1.8" height="1.8"/>
<rect x="545.7" y="721.4" width="1.8" height="1.8"/>
<rect x="545.9" y="718.8" width="1.8" height="1.8"/>
<rect x="547.2" y="724.3" width="1.8" height="1.8"/>
<rect x="554.6" y="720.8" width="1.8" height="1.8"/>
<rect x="556.4" y="721.4" width="1.8" height="1.8"/>
<rect x="559.0" y="722.6" width="1.8" height="1.8"/>
<rect x="560.3" y="724.0" width="1.8" height="1.8"/>
<rect x="562.1" y="724.4" width="1.8" height="1.8"/>
<rect x="564.5" y="721.6" width="1.8" height="1.8"/>
<rect x="567.0" y="721.3" width="1.8" height="1.8"/>
<rect x="568.6" y="722.7" width="1.8" height="1.8"/>
<rect x="569.9" y="724.2" width="1.8" height="1.8"/>
<rect x="571.7" y="724.6" width="1.8" height="1.8"/>
<rect x="573.0" y="723.7" width="1.8" height="1.8"/>
<rect x="573.5" y="723.0" width="1.8" height="1.8"/>
<rect x="575.1" y="723.4" width="1.8" height="1.8"/>
<rect x="577.6" y="723.9" width="1.8" height="1.8"/>
<rect x="607.2" y="722.1" width="1.6" height="1.6"/>
<rect x="588.6" y="722.7" width="1.6" height="1.6"/>
<rect x="592.9" y="721.7" width="1.6" height="1.6"/>
<rect x="592.9" y="723.6" width="1.6" height="1.6"/>
<rect x="588.3" y="722.0" width="1.6" height="1.6"/>
<rect x="589.5" y="719.9" width="1.6" height="1.6"/>
<rect x="607.1" y="720.4" width="1.6" height="1.6"/>
<rect x="604.2" y="723.3" width="1.6" height="1.6"/>
<rect x="612.9" y="722.8" width="1.6" height="1.6"/>
<rect x="590.4" y="721.3" width="1.6" height="1.6"/>
<rect x="594.4" y="722.8" width="1.6" height="1.6"/>
<rect x="590.5" y="719.7" width="1.6" height="1.6"/>
<rect x="621.6" y="724.1" width="1.6" height="1.6"/>
<rect x="634.4" y="720.5" width="1.6" height="1.6"/>
<rect x="642.4" y="723.8" width="1.6" height="1.6"/>
<rect x="639.5" y="720.2" width="1.6" height="1.6"/>
<rect x="640.6" y="719.4" width="1.6" height="1.6"/>
<rect x="637.0" y="722.5" width="1.6" height="1.6"/>
<rect x="637.3" y="723.7" width="1.6" height="1.6"/>
<rect x="662.3" y="723.0" width="1.6" height="1.6"/>
<rect x="660.8" y="724.1" width="1.6" height="1.6"/>
<rect x="680.4" y="720.4" width="1.6" height="1.6"/>
<rect x="676.2" y="721.3" width="1.6" height="1.6"/>
<rect x="678.3" y="723.7" width="1.6" height="1.6"/>
<rect x="706.9" y="722.8" width="1.6" height="1.6"/>
<rect x="703.0" y="723.2" width="1.6" height="1.6"/>
<rect x="702.2" y="722.3" width="1.6" height="1.6"/>
<rect x="722.5" y="720.5" width="1.6" height="1.6"/>
<rect x="731.9" y="722.1" width="1.6" height="1.6"/>
<rect x="102.5" y="683.1" width="2.0" height="2.0"/>
<rect x="155.2" y="683.1" width="2.0" height="2.0"/>
<rect x="168.8" y="702.5" width="2.0" height="2.0"/>
<rect x="212.3" y="701.0" width="2.0" height="2.0"/>
<rect x="230.2" y="695.0" width="2.0" height="2.0"/>
<rect x="281.2" y="710.3" width="2.0" height="2.0"/>
<rect x="105.7" y="716.3" width="2.0" height="2.0"/>
<rect x="59.3" y="765.8" width="2.0" height="2.0"/>
<rect x="69.8" y="765.8" width="2.0" height="2.0"/>
<rect x="94.3" y="767.3" width="2.0" height="2.0"/>
<rect x="105.7" y="765.8" width="2.0" height="2.0"/>
<rect x="119.0" y="767.8" width="2.0" height="2.0"/>
<rect x="167.1" y="770.0" width="2.0" height="2.0"/>
<rect x="179.2" y="766.3" width="2.0" height="2.0"/>
<rect x="191.4" y="764.4" width="2.0" height="2.0"/>
<rect x="192.8" y="767.3" width="2.0" height="2.0"/>
<rect x="216.6" y="767.8" width="2.0" height="2.0"/>
<rect x="240.7" y="765.8" width="2.0" height="2.0"/>
<rect x="252.5" y="766.6" width="2.0" height="2.0"/>
<rect x="254.0" y="768.0" width="2.0" height="2.0"/>
<rect x="266.4" y="765.8" width="2.0" height="2.0"/>
<rect x="288.5" y="767.8" width="2.0" height="2.0"/>
<rect x="288.5" y="769.5" width="2.0" height="2.0"/>
<rect x="59.3" y="782.3" width="2.0" height="2.0"/>
<rect x="309.8" y="690.4" width="2.0" height="2.0"/>
<rect x="309.8" y="701.0" width="2.0" height="2.0"/>
<rect x="320.2" y="701.0" width="2.0" height="2.0"/>
<rect x="359.0" y="678.2" width="2.0" height="2.0"/>
<rect x="372.4" y="702.5" width="2.0" height="2.0"/>
<rect x="383.3" y="701.0" width="2.0" height="2.0"/>
<rect x="386.2" y="701.0" width="2.0" height="2.0"/>
<rect x="407.3" y="702.5" width="2.0" height="2.0"/>
<rect x="482.1" y="702.5" width="2.0" height="2.0"/>
<rect x="372.4" y="728.0" width="2.0" height="2.0"/>
<rect x="312.7" y="767.3" width="2.0" height="2.0"/>
<rect x="338.2" y="765.6" width="2.0" height="2.0"/>
<rect x="338.2" y="768.5" width="2.0" height="2.0"/>
<rect x="350.3" y="767.3" width="2.0" height="2.0"/>
<rect x="375.8" y="766.6" width="2.0" height="2.0"/>
<rect x="387.7" y="768.5" width="2.0" height="2.0"/>
<rect x="398.4" y="767.3" width="2.0" height="2.0"/>
<rect x="398.4" y="773.4" width="2.0" height="2.0"/>
<rect x="435.5" y="767.8" width="2.0" height="2.0"/>
<rect x="447.9" y="765.6" width="2.0" height="2.0"/>
<rect x="483.8" y="764.1" width="2.0" height="2.0"/>
<rect x="497.4" y="768.5" width="2.0" height="2.0"/>
<rect x="519.7" y="768.5" width="2.0" height="2.0"/>
<rect x="560.1" y="687.7" width="2.0" height="2.0"/>
<rect x="673.9" y="701.0" width="2.0" height="2.0"/>
<rect x="677.1" y="702.5" width="2.0" height="2.0"/>
<rect x="710.3" y="701.0" width="2.0" height="2.0"/>
<rect x="545.3" y="765.6" width="2.0" height="2.0"/>
<rect x="557.4" y="767.3" width="2.0" height="2.0"/>
<rect x="569.0" y="765.6" width="2.0" height="2.0"/>
<rect x="581.2" y="768.5" width="2.0" height="2.0"/>
<rect x="728.0" y="768.5" width="2.0" height="2.0"/>
</g>
<path d="M60.0 351.5L61.2 338.1L62.5 304.3L64.8 308.7L73.7 301.1L74.3 315.0L75.5 316.7L76.4 359.5L78.2 358.6L79.4 356.8Q80.0 356.0 80.5 356.5L81.7 357.7L83.9 372.0L85.5 360.8Q86.2 356.0 87.0 356.5L88.9 357.7L92.4 363.1L97.4 380.9L100.4 364.7Q101.7 357.7 102.4 358.0L104.0 358.6L106.9 354.3Q108.1 352.4 109.4 358.3L112.4 372.0L114.6 358.3Q115.6 352.4 117.7 352.4L120.6 352.4Q122.7 352.4 123.8 359.1L126.3 374.7L131.6 360.4L135.1 354.8Q136.6 352.4 138.1 357.7L141.5 370.2L143.9 364.0Q145.0 361.3 145.8 361.8L147.7 363.1L150.8 358.7Q152.1 356.8 153.0 361.4L154.8 372.0L157.3 358.3Q158.4 352.4 159.5 352.7L162.0 353.3L163.8 352.0Q164.6 351.5 165.7 357.1L168.2 370.2L171.3 357.1Q172.6 351.5 174.3 351.5L176.4 351.5Q178.0 351.5 179.5 357.1L183.0 370.2L185.7 356.5Q186.9 350.6 188.9 350.6L191.6 350.6Q193.7 350.6 194.6 359.7L196.7 380.9L199.2 364.1Q200.3 356.8 201.3 357.6L203.8 359.5L211.5 388.0L214.0 369.3Q215.1 361.3 215.7 363.2L217.2 367.5L220.7 364.4Q222.2 363.1 223.1 369.8L225.2 385.4L228.3 352.4L231.8 351.1Q233.3 350.6 232.8 350.6L231.8 350.7L234.9 350.7Q236.2 350.7 236.9 357.5L238.6 373.5L246.9 373.5L248.6 371.6Q249.3 370.8 250.5 376.4L253.5 389.5L255.5 378.3Q256.4 373.5 258.6 373.5L261.6 373.5Q263.9 373.5 264.9 378.3L267.4 389.5L271.4 371.7L273.9 362.3Q274.9 358.3 275.9 361.3L278.1 368.1L282.0 389.5L285.3 373.5L290.2 371.6Q292.4 370.8 293.4 376.4L295.6 389.5L297.7 378.3Q298.6 373.5 300.5 373.5L303.0 373.5Q304.9 373.5 306.2 378.8L309.3 391.3L311.8 378.8Q312.9 373.5 314.8 373.5L317.3 373.5Q319.1 373.5 320.6 378.8L324.1 391.3L327.1 374.4L331.5 373.7Q333.4 373.5 334.7 378.3L337.8 389.5L341.0 376.4Q342.3 370.8 343.9 371.3L347.6 372.6L352.6 391.3L354.8 378.2Q355.7 372.6 357.8 373.1L362.8 374.4L366.4 389.5L368.9 377.0Q369.9 371.7 372.1 372.2L377.1 373.5L381.2 389.5L383.3 378.3Q384.2 373.5 386.3 373.5L389.2 373.5Q391.3 373.5 392.2 378.8L394.3 391.3L396.8 372.6Q397.9 364.6 398.9 366.2L401.1 369.9L405.6 373.5L408.2 388.6L411.6 376.8Q413.0 371.7 414.6 372.2L418.4 373.5L422.8 389.5L426.7 372.6L431.2 372.0Q433.2 371.7 434.2 376.8L436.7 388.6L439.8 374.4L443.3 373.5L446.2 368.2Q447.4 366.0 448.7 373.0L451.7 389.5L454.6 377.7Q455.8 372.6 457.6 372.9L461.7 373.5L465.2 388.6L469.2 372.6L473.5 372.0Q475.4 371.7 476.5 377.0L479.0 389.5L482.1 377.0Q483.4 371.7 485.0 371.7L487.2 371.7Q488.8 371.7 490.1 373.0L493.2 376.1L495.7 369.0Q496.8 366.0 497.6 367.7L499.5 371.7L503.9 373.5L507.0 391.3L511.1 373.5L515.4 372.2Q517.3 371.7 518.8 377.6L522.3 391.3L525.0 378.8Q526.2 373.5 528.1 373.5L530.6 373.5Q532.5 373.5 533.5 378.3L536.0 389.5L539.6 373.5L542.7 372.2Q544.0 371.7 545.6 376.2L549.4 386.8L554.4 370.6Q556.5 363.7 558.7 369.3L563.6 382.4L567.6 364.6L570.4 363.1Q571.7 362.4 572.5 363.6L574.3 366.3L577.5 380.6L581.5 364.6L584.0 363.9Q585.0 363.7 587.3 369.3L592.7 382.4L595.2 369.9Q596.2 364.6 597.8 364.6L600.0 364.6Q601.6 364.6 602.9 369.9L606.0 382.4L608.5 368.0Q609.6 361.9 610.9 362.2L614.1 362.8L615.9 360.9Q616.7 360.1 617.8 366.0L620.3 379.7L623.4 366.0Q624.8 360.1 626.4 360.1L628.5 360.1Q630.1 360.1 631.4 366.8L634.6 382.4L638.1 362.8L643.1 359.7Q645.3 358.3 646.1 361.5L647.9 369.0L651.1 357.2Q652.4 352.1 653.7 352.9L656.8 354.8L663.1 377.9L669.3 357.4L672.4 356.2Q673.8 355.7 674.7 361.8L676.8 376.1L679.1 360.6Q680.0 353.9 682.2 355.2L687.1 358.3L690.7 380.6L693.8 361.3Q695.2 353.0 697.3 353.0L700.2 353.0Q702.3 353.0 703.3 359.4L705.5 374.4L707.6 360.0Q708.5 353.9 710.4 353.9L712.9 353.9Q714.8 353.9 716.0 358.7L718.7 369.9L722.2 356.8Q723.7 351.2 725.3 351.7L729.0 353.0L733.5 369.9L736.0 356.8Q737.1 351.2 738.9 351.7L743.3 353.0L747.2 376.1L751.3 352.1L755.7 349.6Q757.6 348.5 759.1 354.1L762.5 367.2" fill="none" stroke="#14acec" stroke-width="1.300" stroke-linejoin="miter"/>
<g font-family="'Liberation Sans', sans-serif" font-size="16px" fill="#0c0c0c" stroke="#0c0c0c" stroke-width="0.250">
<text x="51.5" y="261.3" text-anchor="end">90</text>
<line x1="54.800" y1="256.20" x2="60" y2="256.20" stroke="#707070" stroke-width="1.200"/>
<text x="51.5" y="321.5" text-anchor="end">80</text>
<line x1="54.800" y1="316.40" x2="60" y2="316.40" stroke="#707070" stroke-width="1.200"/>
<text x="51.5" y="381.7" text-anchor="end">70</text>
<line x1="54.800" y1="376.60" x2="60" y2="376.60" stroke="#707070" stroke-width="1.200"/>
<text x="51.5" y="441.9" text-anchor="end">60</text>
<line x1="54.800" y1="436.80" x2="60" y2="436.80" stroke="#707070" stroke-width="1.200"/>
<text x="51.5" y="502.1" text-anchor="end">50</text>
<line x1="54.800" y1="497.00" x2="60" y2="497.00" stroke="#707070" stroke-width="1.200"/>
<text x="51.5" y="562.3" text-anchor="end">40</text>
<line x1="54.800" y1="557.20" x2="60" y2="557.20" stroke="#707070" stroke-width="1.200"/>
<text x="51.5" y="622.5" text-anchor="end">30</text>
<line x1="54.800" y1="617.40" x2="60" y2="617.40" stroke="#707070" stroke-width="1.200"/>
<text x="51.5" y="682.7" text-anchor="end">20</text>
<line x1="54.800" y1="677.60" x2="60" y2="677.60" stroke="#707070" stroke-width="1.200"/>
<text x="51.5" y="742.9" text-anchor="end">10</text>
<line x1="54.800" y1="737.80" x2="60" y2="737.80" stroke="#707070" stroke-width="1.200"/>
<text x="769.5" y="261.3">4.50</text>
<line x1="762" y1="256.20" x2="765.900" y2="256.20" stroke="#707070" stroke-width="1.200"/>
<text x="769.5" y="321.5">4.00</text>
<line x1="762" y1="316.40" x2="765.900" y2="316.40" stroke="#707070" stroke-width="1.200"/>
<text x="769.5" y="381.7">3.50</text>
<line x1="762" y1="376.60" x2="765.900" y2="376.60" stroke="#707070" stroke-width="1.200"/>
<text x="769.5" y="441.9">3.00</text>
<line x1="762" y1="436.80" x2="765.900" y2="436.80" stroke="#707070" stroke-width="1.200"/>
<text x="769.5" y="502.1">2.50</text>
<line x1="762" y1="497.00" x2="765.900" y2="497.00" stroke="#707070" stroke-width="1.200"/>
<text x="769.5" y="562.3">2.00</text>
<line x1="762" y1="557.20" x2="765.900" y2="557.20" stroke="#707070" stroke-width="1.200"/>
<text x="769.5" y="622.5">1.50</text>
<line x1="762" y1="617.40" x2="765.900" y2="617.40" stroke="#707070" stroke-width="1.200"/>
<text x="769.5" y="682.7">1.00</text>
<line x1="762" y1="677.60" x2="765.900" y2="677.60" stroke="#707070" stroke-width="1.200"/>
<text x="769.5" y="742.9">0.50</text>
<line x1="762" y1="737.80" x2="765.900" y2="737.80" stroke="#707070" stroke-width="1.200"/>
<text x="59.0" y="821.6" text-anchor="middle">0</text>
<text x="129.2" y="821.6" text-anchor="middle">24</text>
<text x="199.4" y="821.6" text-anchor="middle">49</text>
<text x="269.6" y="821.6" text-anchor="middle">74</text>
<text x="339.8" y="821.6" text-anchor="middle">98</text>
<text x="410.0" y="821.6" text-anchor="middle">123</text>
<text x="480.2" y="821.6" text-anchor="middle">148</text>
<text x="550.4" y="821.6" text-anchor="middle">172</text>
<text x="620.6" y="821.6" text-anchor="middle">197</text>
<text x="690.8" y="821.6" text-anchor="middle">222</text>
<text x="737.3" y="821.6" text-anchor="start">247gB</text>
<line x1="60.10" y1="798.800" x2="60.10" y2="806.1" stroke="#6c6c6c" stroke-width="1.200"/>
<line x1="95.20" y1="798.800" x2="95.20" y2="803.1" stroke="#6c6c6c" stroke-width="1.200"/>
<line x1="130.30" y1="798.800" x2="130.30" y2="806.1" stroke="#6c6c6c" stroke-width="1.200"/>
<line x1="165.40" y1="798.800" x2="165.40" y2="803.1" stroke="#6c6c6c" stroke-width="1.200"/>
<line x1="200.50" y1="798.800" x2="200.50" y2="806.1" stroke="#6c6c6c" stroke-width="1.200"/>
<line x1="235.60" y1="798.800" x2="235.60" y2="803.1" stroke="#6c6c6c" stroke-width="1.200"/>
<line x1="270.70" y1="798.800" x2="270.70" y2="806.1" stroke="#6c6c6c" stroke-width="1.200"/>
<line x1="305.80" y1="798.800" x2="305.80" y2="803.1" stroke="#6c6c6c" stroke-width="1.200"/>
<line x1="340.90" y1="798.800" x2="340.90" y2="806.1" stroke="#6c6c6c" stroke-width="1.200"/>
<line x1="376.00" y1="798.800" x2="376.00" y2="803.1" stroke="#6c6c6c" stroke-width="1.200"/>
<line x1="411.10" y1="798.800" x2="411.10" y2="806.1" stroke="#6c6c6c" stroke-width="1.200"/>
<line x1="446.20" y1="798.800" x2="446.20" y2="803.1" stroke="#6c6c6c" stroke-width="1.200"/>
<line x1="481.30" y1="798.800" x2="481.30" y2="806.1" stroke="#6c6c6c" stroke-width="1.200"/>
<line x1="516.40" y1="798.800" x2="516.40" y2="803.1" stroke="#6c6c6c" stroke-width="1.200"/>
<line x1="551.50" y1="798.800" x2="551.50" y2="806.1" stroke="#6c6c6c" stroke-width="1.200"/>
<line x1="586.60" y1="798.800" x2="586.60" y2="803.1" stroke="#6c6c6c" stroke-width="1.200"/>
<line x1="621.70" y1="798.800" x2="621.70" y2="806.1" stroke="#6c6c6c" stroke-width="1.200"/>
<line x1="656.80" y1="798.800" x2="656.80" y2="803.1" stroke="#6c6c6c" stroke-width="1.200"/>
<line x1="691.90" y1="798.800" x2="691.90" y2="806.1" stroke="#6c6c6c" stroke-width="1.200"/>
<line x1="727.00" y1="798.800" x2="727.00" y2="803.1" stroke="#6c6c6c" stroke-width="1.200"/>
<line x1="762.10" y1="798.800" x2="762.10" y2="806.1" stroke="#6c6c6c" stroke-width="1.200"/>
<text x="60" y="250.5" font-size="15px">MB/<tspan font-family="'Liberation Serif','Noto Serif CJK SC','Noto Sans CJK TC',serif" font-size="17px" dy="1">秒</tspan></text>
<text x="741" y="250.5" font-size="15px">ms</text>
</g>
<rect x="84" y="251.6" width="22" height="2" fill="#000" opacity="0.0"/>
</svg>
<svg class="chart" style="z-index:20" width="1010" height="859" viewBox="0 0 1010 859">
<defs>
<linearGradient id="yl" x1="0" y1="0" x2="1" y2="1"><stop offset="0" stop-color="#ffffee"/><stop offset="1" stop-color="#ffff98"/></linearGradient>
<linearGradient id="bl" x1="0" y1="0" x2="1" y2="0"><stop offset="0" stop-color="#0a50f0"/><stop offset=".6" stop-color="#1c90ff"/><stop offset="1" stop-color="#0a50f0"/></linearGradient>
<linearGradient id="fd" x1="0" y1="0" x2="1" y2="1"><stop offset="0" stop-color="#f4dc28"/><stop offset="1" stop-color="#d89c10"/></linearGradient>
<linearGradient id="tr" x1="0" y1="0" x2="1" y2="0"><stop offset="0" stop-color="#222"/><stop offset=".25" stop-color="#e8e8e8"/><stop offset=".42" stop-color="#707070"/><stop offset=".6" stop-color="#b8b8b8"/><stop offset=".75" stop-color="#2a2a2a"/><stop offset=".88" stop-color="#8a8a8a"/><stop offset="1" stop-color="#111"/></linearGradient>
<linearGradient id="pgr" x1="0" y1="0" x2="1" y2="0"><stop offset="0" stop-color="#fff"/><stop offset="1" stop-color="#dedede"/></linearGradient>
<linearGradient id="mg" x1="0" y1="0" x2=".4" y2="1"><stop offset="0" stop-color="#e030d8"/><stop offset=".35" stop-color="#c808c0"/><stop offset="1" stop-color="#a80098"/></linearGradient>
</defs>
<g><path d="M57.400 147h14.200l6 6v16h-20.200z" fill="#e9e9e9" stroke="#111" stroke-width="2" stroke-linejoin="round"/><path d="M71.300 147.300v6h6" fill="#fff" stroke="#111" stroke-width="1.400"/>
<path d="M67 149c3 0 4.500 2.200 4.500 4.800 0 3-2.200 5-3 8.600h-3c-.8-3.600-3-5.600-3-8.600 0-2.600 1.500-4.800 4.500-4.800z" fill="#e010e0" stroke="#30003a" stroke-width="1.100"/><ellipse cx="67" cy="166" rx="2.900" ry="2.100" fill="#e010e0" stroke="#30003a" stroke-width="1.100"/></g>
<g><path d="M62 173.600c3.900 0 5.700 2.700 5.700 6 0 3.900-2.700 6.400-3.400 11h-4.600c-.7-4.600-3.400-7.100-3.400-11 0-3.300 1.800-6 5.700-6z" fill="#dcd400" stroke="#3c3600" stroke-width="1.500"/><path d="M66.500 177c1.500 3.500-.5 7-2 12" stroke="#6a6200" stroke-width="1.300" fill="none"/><path d="M59.500 176.500c-1 1-1.400 2.400-1.200 4" stroke="#ffff90" stroke-width="1.300" fill="none"/>
<ellipse cx="61.900" cy="194.400" rx="3.900" ry="2.900" fill="#dcd400" stroke="#3c3600" stroke-width="1.500"/></g>
<g><rect x="272" y="146.800" width="22.500" height="22.500" rx="1.500" fill="url(#yl)" stroke="#151515" stroke-width="2"/><rect x="272.5" y="156.0" width="3.5" height="12.9" fill="#00f000"/><rect x="276.0" y="161.2" width="2.4" height="7.7" fill="#4444ff"/><rect x="278.4" y="162.3" width="2.8" height="6.6" fill="#00f000"/><rect x="281.2" y="154.9" width="1.7" height="14.0" fill="#4444ff"/><rect x="282.9" y="156.3" width="4.9" height="12.6" fill="#00f000"/><rect x="287.8" y="159.5" width="2.8" height="9.4" fill="#4444ff"/><rect x="290.6" y="160.9" width="3.5" height="8.0" fill="#00f000"/></g>
<g><path d="M450.300 155h3.300l11.400-8.300v21.600l-11.400-8.300h-3.300z" fill="#ece400" stroke="#111" stroke-width="1.800" stroke-linejoin="round"/><path d="M461 149.500v16.500" stroke="#8a8400" stroke-width="1.200"/><circle cx="462" cy="157.300" r="1.200" fill="#ccc" stroke="#555" stroke-width=".600"/>
<path d="M467.900 153.300c1.900 2.300 1.900 5.800 0 8.100" fill="none" stroke="#3a3a3a" stroke-width="1.900"/><path d="M470.200 150.600c4 4 4 9.500 0 13.400" fill="none" stroke="#2c2c2c" stroke-width="2.100"/></g>
<g><rect x="665" y="146.800" width="22.500" height="22.500" rx="1.500" fill="url(#yl)" stroke="#151515" stroke-width="2"/><circle cx="669.3" cy="157.0" r="1.150" fill="#5858ff"/><circle cx="675.3" cy="157.0" r="1.150" fill="#5858ff"/><circle cx="678.0" cy="154.2" r="1.150" fill="#5858ff"/><circle cx="681.2" cy="152.8" r="1.150" fill="#5858ff"/><circle cx="681.2" cy="156.0" r="1.150" fill="#5858ff"/><circle cx="667.6" cy="160.3" r="1.150" fill="#5858ff"/><circle cx="672.1" cy="161.9" r="1.150" fill="#5858ff"/><circle cx="669.3" cy="161.9" r="1.150" fill="#ff4040"/><circle cx="675.3" cy="160.3" r="1.150" fill="#ff4040"/><circle cx="681.2" cy="160.3" r="1.150" fill="#ff4040"/><circle cx="678.0" cy="163.3" r="1.150" fill="#ff4040"/><circle cx="682.9" cy="163.3" r="1.150" fill="#ff4040"/><circle cx="669.3" cy="164.7" r="1.150" fill="#ff4040"/><circle cx="675.3" cy="164.7" r="1.150" fill="#ff4040"/><circle cx="667.6" cy="168.0" r="1.150" fill="#ff4040"/></g>
<g><rect x="843.500" y="147" width="22.600" height="22.200" rx="1.200" fill="url(#yl)" stroke="#151515" stroke-width="2"/><rect x="844.1" y="156.3" width="3.2" height="12.3" fill="#00f000"/><rect x="847.3" y="161.0" width="2.8" height="7.5" fill="#4444ff"/><rect x="850.0" y="162.2" width="2.0" height="6.3" fill="#00f000"/><rect x="852.300" y="155.600" width="12.900" height="12.700" fill="#fff" stroke="#111" stroke-width="1.500"/><rect x="853" y="156.300" width="11.500" height="1.800" fill="#0000a0"/><circle cx="855.0" cy="160.4" r="1.050" fill="#ff4040"/><circle cx="858.1" cy="160.4" r="1.050" fill="#4060ff"/><circle cx="861.3" cy="160.4" r="1.050" fill="#ff4040"/><circle cx="855.0" cy="163.2" r="1.050" fill="#30d030"/><circle cx="858.1" cy="163.2" r="1.050" fill="#ff4040"/><circle cx="861.3" cy="163.2" r="1.050" fill="#ff4040"/><circle cx="855.0" cy="166.2" r="1.050" fill="#ff4040"/><circle cx="858.1" cy="166.2" r="1.050" fill="#ff4040"/><circle cx="861.3" cy="166.2" r="1.050" fill="#4060ff"/></g>
<g><ellipse cx="230.800" cy="179.500" rx="4.200" ry="3.100" fill="#20c8ff" stroke="#08080e" stroke-width="2"/>
<path d="M225 185.500h9.800v11.600l1.600 2.600h-13.300l4.200-3.400v-8h-2.300z" fill="url(#bl)" stroke="#06060c" stroke-width="2.100" stroke-linejoin="round"/></g>
<g><path d="M357.500 176.800h7.800v7.800h7.500v7.600h-7.500v7.600h-7.800v-7.600h-7.700v-7.600h7.700z" fill="#e82222" stroke="#2a0505" stroke-width="1.800" stroke-linejoin="round"/><path d="M359.300 178.800v7.500h-7.700" fill="none" stroke="#ff7070" stroke-width="1.100"/></g>
<g><path d="M529.500 189.500l8 7.800" stroke="#08080f" stroke-width="6.200" stroke-linecap="round"/><path d="M529.500 189.500l7.800 7.500" stroke="#1414d8" stroke-width="3.200" stroke-linecap="round"/>
<path d="M520.500 176.600h6.600l4.600 4.600v6.600l-4.600 4.600h-6.600l-4.600-4.600v-6.600z" fill="#38e048" stroke="#0c1c0c" stroke-width="1.700" stroke-linejoin="round"/><path d="M520 180.500l2.500-2M524.800 187.500l3.800-3" stroke="#b0ffb8" stroke-width="1.300" stroke-linecap="round"/></g>
<g><path d="M683 198.200v-18.200l2.300-3h6.200l2.700 2.700h7.800v2.500" fill="#f4e430" stroke="#111" stroke-width="1.800" stroke-linejoin="round"/><path d="M683 198.200l2.700-13" stroke="#111" stroke-width="1.600"/>
<rect x="686" y="183.200" width="17.600" height="15.600" rx="1" fill="url(#fd)" stroke="#111" stroke-width="1.800"/><path d="M700.600 184.200v13.600" stroke="#f8eeb0" stroke-width="1.100"/></g>
<g><path d="M890 177.400c2-1.500 8.500-1.500 10.500 0" fill="none" stroke="#111" stroke-width="1.800"/><rect x="885" y="177.600" width="20.600" height="3.800" rx="1" fill="#3a3a3a" stroke="#0a0a0a" stroke-width="1"/>
<path d="M886.800 181.600h17l-.6 18.400h-15.800z" fill="url(#tr)" stroke="#0a0a0a" stroke-width="1.500" stroke-linejoin="round"/></g>
<g><path d="M388 92.800c0-1.400 1.200-2.200 3.100-2.200s3.100.8 3.100 2.200v13c1.600 1 2.500 2.500 2.500 4.400 0 3.100-2.700 5.300-6 5.300s-6-2.200-6-5.300c0-1.900 1.300-3.500 3.300-4.500z" fill="#f00808" stroke="#1a1a1a" stroke-width="1.300"/><rect x="388.400" y="91.200" width="5.300" height="5.400" rx="1" fill="#30e0e0"/><path d="M394.600 93v13.500c1.500 1 2.200 2.300 2.100 3.900" fill="none" stroke="#151515" stroke-width="1.700"/><path d="M385.700 107.500c-1 1.200-1.200 2.400-.9 3.800" stroke="#50d8e0" stroke-width="1.500" fill="none"/><ellipse cx="388.600" cy="109.800" rx="1.500" ry="1.100" fill="#ffd0d0"/></g>
<g><path d="M534.2 92.6h5.6l4 4v14.600000000000001h-9.6z" fill="url(#pgr)" stroke="#1c1c1c" stroke-width="1.700" stroke-linejoin="round"/><path d="M544.4000000000001 96.6v15.200000000000001h-8.6" fill="none" stroke="#111" stroke-width="1.600"/><path d="M539.8000000000001 92.6v4h4" fill="#fff" stroke="#1c1c1c" stroke-width="1"/><rect x="535.6" y="97.8" width="5.5" height="1.500" fill="#2a80ff"/><rect x="535.6" y="100.2" width="7.8" height="1.500" fill="#2a80ff"/><rect x="535.6" y="102.6" width="7.8" height="1.500" fill="#2a80ff"/><rect x="535.6" y="105.0" width="7.8" height="1.500" fill="#2a80ff"/><path d="M543.8 95.7h8.2l4 4v14.8h-12.2z" fill="url(#pgr)" stroke="#1c1c1c" stroke-width="1.700" stroke-linejoin="round"/><path d="M556.6 99.7v15.4h-11.2" fill="none" stroke="#111" stroke-width="1.600"/><path d="M552.0 95.7v4h4" fill="#fff" stroke="#1c1c1c" stroke-width="1"/><rect x="545.6" y="100.8" width="5.7" height="1.500" fill="#2a80ff"/><rect x="545.6" y="103.2" width="8.2" height="1.500" fill="#2a80ff"/><rect x="545.6" y="105.6" width="8.2" height="1.500" fill="#2a80ff"/><rect x="545.6" y="108.0" width="8.2" height="1.500" fill="#2a80ff"/></g>
<g><path d="M579.2 92.6h5.6l4 4v14.600000000000001h-9.6z" fill="url(#pgr)" stroke="#1c1c1c" stroke-width="1.700" stroke-linejoin="round"/><path d="M589.4000000000001 96.6v15.200000000000001h-8.6" fill="none" stroke="#111" stroke-width="1.600"/><path d="M584.8000000000001 92.6v4h4" fill="#fff" stroke="#1c1c1c" stroke-width="1"/><rect x="581.5" y="97.5" width="6.8" height="8.5" fill="#20c8e8"/><rect x="581.5" y="99.3" width="6.8" height="6.7" fill="#20c030"/><rect x="583.9" y="100.0" width="2.7" height="4.2" fill="#a8c020"/><rect x="584.6" y="100.9" width="2" height="2.400" fill="#f04010"/><path d="M588.8 95.7h8.2l4 4v14.8h-12.2z" fill="url(#pgr)" stroke="#1c1c1c" stroke-width="1.700" stroke-linejoin="round"/><path d="M601.6 99.7v15.4h-11.2" fill="none" stroke="#111" stroke-width="1.600"/><path d="M597.0 95.7v4h4" fill="#fff" stroke="#1c1c1c" stroke-width="1"/><rect x="591" y="100.8" width="6.8" height="8.5" fill="#20c8e8"/><rect x="591" y="102.6" width="6.8" height="6.7" fill="#20c030"/><rect x="593.4" y="103.3" width="2.7" height="4.2" fill="#a8c020"/><rect x="594.1" y="104.2" width="2" height="2.400" fill="#f04010"/></g>
<g><path d="M630.800 97.500v-1.500c0-1.600 1.200-2.600 2.800-2.600h2.600c1.600 0 2.800 1 2.800 2.600v1.500" fill="none" stroke="#1a1a1a" stroke-width="1.900"/><rect x="623.800" y="97.600" width="22.800" height="12.800" rx="2.600" fill="#262626"/><circle cx="634.500" cy="104.300" r="3.600" fill="#f2f2f2" stroke="#666" stroke-width="1.200"/><circle cx="641.600" cy="102.400" r="1.400" fill="#20f040"/></g>
<g><polygon points="683.4,99.2 681.1,100.6 681.6,102.7 678.6,102.7 677.1,104.5 674.8,103.2 672.0,103.9 671.5,101.8 668.7,101.1 670.2,99.2 668.7,97.3 671.5,96.6 672.0,94.5 674.8,95.2 677.1,93.9 678.6,95.7 681.6,95.7 681.1,97.8" fill="#e4dc10" stroke="#5a5400" stroke-width="1.300" stroke-linejoin="round"/><rect x="674.5" y="93.0" width="2.600" height="7.400" rx="1" fill="#b8b8b8" stroke="#505050" stroke-width="0.900"/><polygon points="691.9,106.8 689.6,108.2 690.1,110.3 687.1,110.3 685.6,112.1 683.3,110.8 680.5,111.5 680.0,109.4 677.2,108.7 678.7,106.8 677.2,104.9 680.0,104.2 680.5,102.1 683.3,102.8 685.6,101.5 687.1,103.3 690.1,103.3 689.6,105.4" fill="#e4dc10" stroke="#5a5400" stroke-width="1.300" stroke-linejoin="round"/><rect x="683.0" y="100.6" width="2.600" height="7.400" rx="1" fill="#b8b8b8" stroke="#505050" stroke-width="0.900"/></g>
<g><rect x="718.300" y="88.900" width="28.200" height="28.600" rx="2.600" fill="url(#mg)"/><rect x="718.800" y="115" width="27.200" height="2.500" rx="1.200" fill="#8a0082"/><path d="M720 91.500c0-1 .8-1.600 1.600-1.600h21.500" fill="none" stroke="#f090ea" stroke-width="1.200"/>
<path d="M731.900 92.500v19" stroke="#fff" stroke-width="3" stroke-linecap="round"/><path d="M723.200 105.600l8.700 9.600 8.700-9.600c-3 1.400-5.700 1.800-8.700 1.800s-5.700-.4-8.700-1.800z" fill="#fff" stroke="#fff" stroke-width="1.600" stroke-linejoin="round"/></g>
<g transform="translate(0,-1)"><path d="M14.200 25.200l11-10.800 10.800 5.600-9.300 12.300z" fill="#161616"/><path d="M14.200 25.200l12.500 7.100v1.200l-12.500-7.300z" fill="#3a3a3a"/><ellipse cx="27" cy="21.200" rx="6.300" ry="4.700" transform="rotate(-30 27 21.200)" fill="#f0ae3c"/><ellipse cx="27" cy="21.200" rx="3.600" ry="2.600" transform="rotate(-30 27 21.200)" fill="#fadc9a"/><ellipse cx="27" cy="21.200" rx="1.500" ry="1.100" transform="rotate(-30 27 21.200)" fill="#9898a8"/><path d="M21.500 26l3.200 3" stroke="#b0b0b8" stroke-width="2"/></g>
</svg>

<div class="btn" style="left:820px;top:224px;width:129px;height:36px;text-align:center;font-size:17px;line-height:35px;letter-spacing:1px">開始</div>
<div class="sep" style="top:279.8px"></div>
<div class="rd" style="top:291.8px"><i></i></div>
<div class="lbl" style="left:838.6px;top:287.6px;">讀取</div>
<div class="rd" style="top:320.6px"></div>
<div class="lbl" style="left:838.6px;top:316.6px;">寫入</div>
<div class="sep" style="top:347.4px"></div>
<div class="cb" style="top:362.2px"></div>
<div class="lbl" style="left:838.6px;top:357.90000000000003px;">短程測試</div>
<div class="abs" style="left:814px;top:395.500px;width:108px;height:34px;border:1px solid #c2c6cc;background:#fff"></div>
<div class="abs" style="left:895.500px;top:396.500px;width:25.500px;height:32px;background:#eeeeee"></div>
<div class="abs" style="left:897px;top:398px;width:23px;height:14.500px;border:1px solid #d0d0d0;background:#f3f3f3"></div>
<div class="abs" style="left:897px;top:413.500px;width:23px;height:14.500px;border:1px solid #d0d0d0;background:#f3f3f3"></div>
<svg class="abs" style="left:902px;top:400px" width="14" height="26" viewBox="0 0 14 26"><path d="M3 7.500l4-4.500 4 4.500zM3 18.500l4 4.500 4-4.500z" fill="#606060"/></svg>
<div class="abs" style="left:819.800px;top:401.400px;font-size:18.500px;color:#9a9a9a;white-space:nowrap;letter-spacing:0.300px">40</div>
<div class="abs" style="left:942px;top:401.500px;font-size:18px;color:#1a1a1a;white-space:nowrap">GB</div>
<div class="cb" style="top:447.6px"><svg width="19" height="19" viewBox="0 0 19 19"><path d="M3.500 9.500l4 4.500 8-10" fill="none" stroke="#222" stroke-width="1.600"/></svg></div>
<div class="lbl" style="left:839.2px;top:444.2px;">傳輸速率</div>
<div class="sep" style="top:470.7px"></div>
<div class="lbl" style="left:814.6px;top:473.90000000000003px;">最小值</div>
<div class="blk" style="top:502.5px;color:#12b0f2">67.5 MB/s</div>
<div class="lbl" style="left:814.6px;top:531.0px;">最大值</div>
<div class="blk" style="top:558.4px;color:#12b0f2">82.4 MB/s</div>
<div class="lbl" style="left:814.6px;top:584.5px;">平均值</div>
<div class="blk" style="top:612.8px;color:#12b0f2">71.5 MB/s</div>
<div class="sep" style="top:650.9px"></div>
<div class="cb" style="top:664.4px"><svg width="19" height="19" viewBox="0 0 19 19"><path d="M3.500 9.500l4 4.500 8-10" fill="none" stroke="#222" stroke-width="1.600"/></svg></div>
<div class="lbl" style="left:839.2px;top:659.8px;">存取時間</div>
<div class="blk" style="top:689.2px;color:#f8f400">0.611 ms</div>
<div class="cb" style="top:722.8px"><svg width="19" height="19" viewBox="0 0 19 19"><path d="M3.500 9.500l4 4.500 8-10" fill="none" stroke="#222" stroke-width="1.600"/></svg></div>
<div class="lbl" style="left:839.2px;top:718.9px;">高載速率</div>
<div class="blk" style="top:747.3px;color:#fff">19.5 MB/s</div>
<div class="lbl" style="left:814.6px;top:776.8px;">CPU 使用率</div>
<div class="blk" style="top:804.9px;color:#fff">12.6%</div>
<div id="inner"></div><div id="frame"></div>
</body></html>
